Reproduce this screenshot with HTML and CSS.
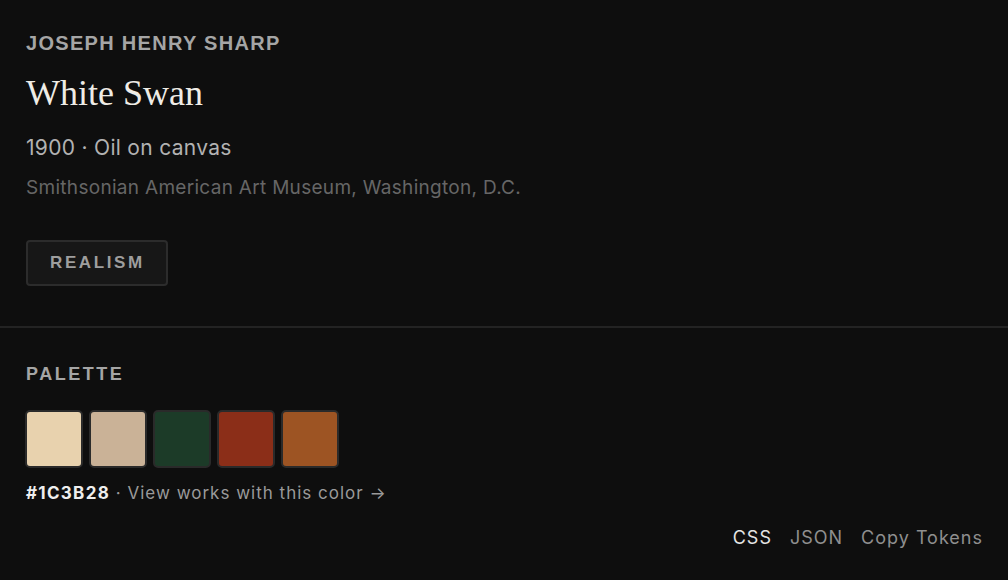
FILE: index.html
```html
<!DOCTYPE html>
<html lang="en">
<head>
    <meta charset="UTF-8">
    <meta name="viewport" content="width=device-width, initial-scale=1.0">
    <title>White Swan - Joseph Henry Sharp</title>
    <link rel="stylesheet" href="styles.css">
</head>
<body>

    <div class="obra">
        <div class="artista">JOSEPH HENRY SHARP</div>
        <h1 class="titulo">White Swan</h1>
        <div class="info">1900 · Oil on canvas</div>
        <div class="museu">Smithsonian American Art Museum, Washington, D.C.</div>
        <span class="movimento">REALISM</span>
    </div>

    <div class="paleta">
        <div class="rotulo">PALETTE</div>
        <div class="cores">
            <div class="cor" style="background: #e8d2ae"></div>
            <div class="cor" style="background: #cab297"></div>
            <div class="cor" style="background: #1c3b28"></div>
            <div class="cor" style="background: #8b2e18"></div>
            <div class="cor" style="background: #9d5423"></div>
        </div>
        <div class="cor-atual"><b>#1C3B28</b> · View works with this color →</div>
    </div>

    <div class="exportar">
        <span class="ativo">CSS</span>
        <span>JSON</span>
        <span>Copy Tokens</span>
    </div>

</body>
</html>
```

FILE: styles.css
```css
* {
    margin: 0;
    padding: 0;
    box-sizing: border-box;
    font-family: Inter, "Liberation Sans", Arial, sans-serif;
}

body {
    background: #0e0e0e;
    width: 1008px;
    height: 580px;
    overflow: hidden;
    color: #eee;
}

.obra {
    padding: 32px 26px 40px;
    border-bottom: 2px solid #232323;
}

.artista {
    font-family: "Liberation Sans", Arial, sans-serif;
    font-size: 20px;
    font-weight: bold;
    letter-spacing: 1.3px;
    color: #a5a5a5;
}

.titulo {
    font-family: "Liberation Serif", serif;
    font-weight: normal;
    font-size: 36px;
    color: #efece6;
    margin-top: 16px;
    line-height: 44px;
}

.info {
    font-size: 21px;
    letter-spacing: 0.3px;
    color: #b2b2b2;
    margin-top: 20px;
}

.museu {
    font-size: 19px;
    letter-spacing: 0.3px;
    color: #666;
    margin-top: 16px;
}

.movimento {
    display: inline-block;
    margin-top: 41px;
    padding: 11px 21px 11px 22px;
    line-height: 20px;
    background: #171717;
    border: 2px solid #2c2c2c;
    border-radius: 4px;
    font-family: "Liberation Sans", Arial, sans-serif;
    font-size: 17px;
    font-weight: bold;
    letter-spacing: 2.6px;
    color: #9e9e9e;
}

.paleta {
    padding: 36px 26px 0;
}

.rotulo {
    font-family: "Liberation Sans", Arial, sans-serif;
    font-size: 18px;
    font-weight: bold;
    letter-spacing: 2.5px;
    color: #a5a5a5;
}

.cores {
    display: flex;
    gap: 6px;
    margin-top: 25px;
    margin-left: -1px;
}

.cor {
    width: 58px;
    height: 58px;
    border: 2px solid #2a2a2a;
    border-radius: 5px;
}

.cor-atual {
    margin-top: 15px;
    font-size: 17px;
    letter-spacing: 1px;
    color: #9a9a9a;
}

.cor-atual b {
    color: #eee;
    letter-spacing: 1.3px;
}

.exportar {
    display: flex;
    justify-content: flex-end;
    gap: 18px;
    padding: 24px 25px 0;
    font-size: 18px;
    letter-spacing: 1px;
    color: #8f8f8f;
}

.exportar .ativo {
    color: #e4e4e4;
}
```
